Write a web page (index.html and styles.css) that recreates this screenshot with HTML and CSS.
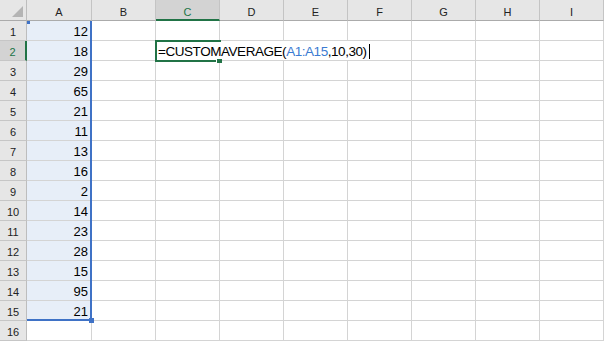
FILE: index.html
```html
<!DOCTYPE html>
<html lang="en">
<head>
  <meta charset="UTF-8">
  <meta name="viewport" content="width=device-width, initial-scale=1.0">
  <title>Custom Average Function</title>
  <link rel="stylesheet" href="styles.css">
</head>
<body>
<div class="sheet">
  <div class="corner">
    <svg width="11" height="11" viewBox="0 0 11 11"><polygon points="11,0 11,11 0,11" fill="#b4b4b4"/></svg>
  </div>
  <div class="col-h">A</div><div class="col-h">B</div><div class="col-h active">C</div><div class="col-h">D</div><div class="col-h">E</div><div class="col-h">F</div><div class="col-h">G</div><div class="col-h">H</div><div class="col-h">I</div>

  <div class="row-h">1</div><div class="cell sel">12</div><div class="cell"></div><div class="cell"></div><div class="cell"></div><div class="cell"></div><div class="cell"></div><div class="cell"></div><div class="cell"></div><div class="cell"></div>
  <div class="row-h active">2</div><div class="cell sel">18</div><div class="cell"></div><div class="cell formula">=CUSTOMAVERAGE(<span class="ref">A1:A15</span>,10,30)<span class="caret"></span></div><div class="cell"></div><div class="cell"></div><div class="cell"></div>
  <div class="row-h">3</div><div class="cell sel">29</div><div class="cell"></div><div class="cell"></div><div class="cell"></div><div class="cell"></div><div class="cell"></div><div class="cell"></div><div class="cell"></div><div class="cell"></div>
  <div class="row-h">4</div><div class="cell sel">65</div><div class="cell"></div><div class="cell"></div><div class="cell"></div><div class="cell"></div><div class="cell"></div><div class="cell"></div><div class="cell"></div><div class="cell"></div>
  <div class="row-h">5</div><div class="cell sel">21</div><div class="cell"></div><div class="cell"></div><div class="cell"></div><div class="cell"></div><div class="cell"></div><div class="cell"></div><div class="cell"></div><div class="cell"></div>
  <div class="row-h">6</div><div class="cell sel">11</div><div class="cell"></div><div class="cell"></div><div class="cell"></div><div class="cell"></div><div class="cell"></div><div class="cell"></div><div class="cell"></div><div class="cell"></div>
  <div class="row-h">7</div><div class="cell sel">13</div><div class="cell"></div><div class="cell"></div><div class="cell"></div><div class="cell"></div><div class="cell"></div><div class="cell"></div><div class="cell"></div><div class="cell"></div>
  <div class="row-h">8</div><div class="cell sel">16</div><div class="cell"></div><div class="cell"></div><div class="cell"></div><div class="cell"></div><div class="cell"></div><div class="cell"></div><div class="cell"></div><div class="cell"></div>
  <div class="row-h">9</div><div class="cell sel">2</div><div class="cell"></div><div class="cell"></div><div class="cell"></div><div class="cell"></div><div class="cell"></div><div class="cell"></div><div class="cell"></div><div class="cell"></div>
  <div class="row-h">10</div><div class="cell sel">14</div><div class="cell"></div><div class="cell"></div><div class="cell"></div><div class="cell"></div><div class="cell"></div><div class="cell"></div><div class="cell"></div><div class="cell"></div>
  <div class="row-h">11</div><div class="cell sel">23</div><div class="cell"></div><div class="cell"></div><div class="cell"></div><div class="cell"></div><div class="cell"></div><div class="cell"></div><div class="cell"></div><div class="cell"></div>
  <div class="row-h">12</div><div class="cell sel">28</div><div class="cell"></div><div class="cell"></div><div class="cell"></div><div class="cell"></div><div class="cell"></div><div class="cell"></div><div class="cell"></div><div class="cell"></div>
  <div class="row-h">13</div><div class="cell sel">15</div><div class="cell"></div><div class="cell"></div><div class="cell"></div><div class="cell"></div><div class="cell"></div><div class="cell"></div><div class="cell"></div><div class="cell"></div>
  <div class="row-h">14</div><div class="cell sel">95</div><div class="cell"></div><div class="cell"></div><div class="cell"></div><div class="cell"></div><div class="cell"></div><div class="cell"></div><div class="cell"></div><div class="cell"></div>
  <div class="row-h">15</div><div class="cell sel">21</div><div class="cell"></div><div class="cell"></div><div class="cell"></div><div class="cell"></div><div class="cell"></div><div class="cell"></div><div class="cell"></div><div class="cell"></div>
  <div class="row-h">16</div><div class="cell"></div><div class="cell"></div><div class="cell"></div><div class="cell"></div><div class="cell"></div><div class="cell"></div><div class="cell"></div><div class="cell"></div><div class="cell"></div>

  <!-- overlays: referenced range and active cell -->
  <div class="range"></div>
  <div class="range-dot"></div>
  <div class="range-handle"></div>
  <div class="active-cell"></div>
  <div class="fill-handle"></div>
</div>
</body>
</html>
```

FILE: styles.css
```css
body {
    margin: 0;
    background-color: #ffffff;
    font-family: "Liberation Sans", Arial, sans-serif;
}

.sheet {
    position: relative;
    display: grid;
    grid-template-columns: 27px 65px repeat(8, 64px);
    grid-template-rows: 21px repeat(16, 20px);
    width: 604px;
    height: 341px;
    overflow: hidden;
}

.corner {
    display: flex;
    justify-content: flex-end;
    align-items: flex-end;
    padding: 0 3px 3px 0;
    background-color: #e6e6e6;
    border-right: 1px solid #bdbdbd;
    border-bottom: 1px solid #ababab;
    box-sizing: border-box;
}

.col-h {
    background-color: #e6e6e6;
    border-right: 1px solid #c4c4c4;
    border-bottom: 1px solid #ababab;
    box-sizing: border-box;
    color: #222222;
    font-size: 11px;
    line-height: 20px;
    padding-top: 2px;
    text-align: center;
}
.col-h.active {
    background-color: #d3d3d3;
    border-bottom: 2px solid #217346;
    color: #217346;
}

.row-h {
    background-color: #e6e6e6;
    border-right: 1px solid #bdbdbd;
    border-bottom: 1px solid #c6c6c6;
    box-sizing: border-box;
    color: #222222;
    font-size: 11px;
    line-height: 20px;
    padding-top: 1px;
    text-align: center;
}
.row-h.active {
    background-color: #d3d3d3;
    border-right: 2px solid #217346;
    color: #217346;
}

.cell {
    border-right: 1px solid #d4d4d4;
    border-bottom: 1px solid #d4d4d4;
    box-sizing: border-box;
    color: #000000;
    font-size: 13px;
    line-height: 19px;
    padding-top: 1px;
    white-space: nowrap;
}
.cell.sel {
    background-color: #e7eef8;
    text-align: right;
    padding-right: 3px;
}
.cell.formula {
    grid-column: span 4;
    padding-left: 2px;
    font-size: 13.5px;
    letter-spacing: -0.45px;
}
.ref {
    color: #3b7bd2;
}
.caret {
    display: inline-block;
    width: 1px;
    height: 15px;
    margin-left: 2px;
    background-color: #000000;
    vertical-align: -3px;
}

.range {
    position: absolute;
    left: 27px;
    top: 21px;
    width: 65px;
    height: 300px;
    border-right: 2px solid #3f72c6;
    border-bottom: 2px solid #3f72c6;
    box-sizing: border-box;
}
.range-dot {
    position: absolute;
    left: 27px;
    top: 21px;
    width: 3px;
    height: 3px;
    background-color: #3f72c6;
}
.range-handle {
    position: absolute;
    left: 89px;
    top: 318px;
    width: 5px;
    height: 5px;
    background-color: #3f72c6;
}

/* the in-cell editor covers the right edge of the active cell */
.active-cell {
    position: absolute;
    left: 155px;
    top: 40px;
    width: 66px;
    height: 22px;
    border: 2px solid #217346;
    border-right: none;
    box-sizing: border-box;
}
.fill-handle {
    position: absolute;
    left: 217px;
    top: 59px;
    width: 5px;
    height: 4px;
    background-color: #217346;
    box-shadow: -1px -1px 0 #ffffff;
}
```
